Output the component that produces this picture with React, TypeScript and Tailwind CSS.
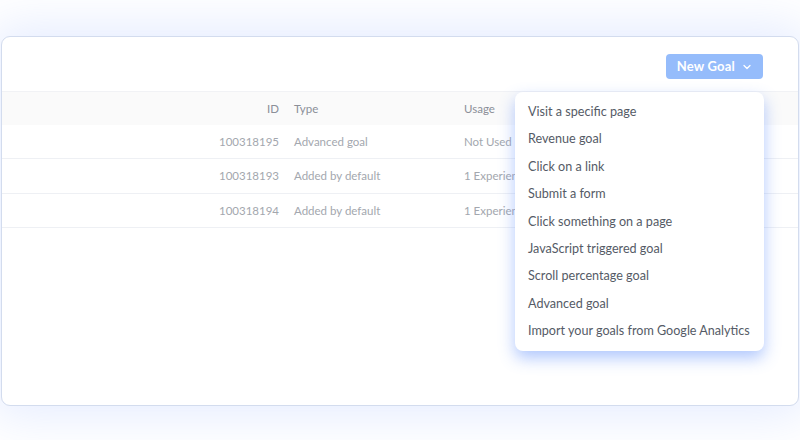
import { ChevronDown } from "lucide-react";

const rows = [
  { id: "100318195", type: "Advanced goal", usage: "Not Used" },
  { id: "100318193", type: "Added by default", usage: "1 Experience" },
  { id: "100318194", type: "Added by default", usage: "1 Experience" },
];

const menuItems = [
  "Visit a specific page",
  "Revenue goal",
  "Click on a link",
  "Submit a form",
  "Click something on a page",
  "JavaScript triggered goal",
  "Scroll percentage goal",
  "Advanced goal",
  "Import your goals from Google Analytics",
];

export default function App() {
  return (
    <div
      className="w-[800px] h-[440px] bg-white overflow-hidden pt-[36px] px-px"
      style={{ fontFamily: "Lato, 'Noto Sans', sans-serif" }}
    >
      <div className="relative h-[370px] rounded-[9px] border border-[#d3dcee] bg-white shadow-[0_0_50px_10px_rgba(110,150,255,0.18)] overflow-hidden">
        <div className="flex justify-end pt-[17px] pr-[35px]">
          <button className="flex items-center gap-[6px] h-[25px] pl-[11px] pr-[10px] rounded-[4px] bg-[#95bcfb] text-white text-[13px] font-bold tracking-[0.2px]">
            New Goal
            <ChevronDown size={12} strokeWidth={2.5} />
          </button>
        </div>

        <div className="mt-[12px] text-[11.5px]">
          <div className="grid grid-cols-[277px_155px_52px] gap-x-[15px] h-[34px] items-center bg-[#fafafa] border-t border-[#f1f2f5] text-[#8b8f98]">
            <span className="text-right">ID</span>
            <span>Type</span>
            <span>Usage</span>
          </div>
          {rows.map((r) => (
            <div
              key={r.id}
              className="grid grid-cols-[277px_155px_52px] gap-x-[15px] h-[34.3px] items-center border-b border-[#eef0f4] text-[#a3a7ae]"
            >
              <span className="text-right">{r.id}</span>
              <span>{r.type}</span>
              <span className="whitespace-nowrap overflow-hidden">{r.usage}</span>
            </div>
          ))}
        </div>

        <div className="absolute left-[513px] top-[55px] w-[249px] rounded-[8px] bg-white py-[6px] shadow-[0_7px_16px_rgba(80,130,250,0.45)]">
          {menuItems.map((m) => (
            <div
              key={m}
              className="px-[13px] leading-[27.4px] text-[12.6px] text-[#555b66] whitespace-nowrap"
            >
              {m}
            </div>
          ))}
        </div>
      </div>
    </div>
  );
}
